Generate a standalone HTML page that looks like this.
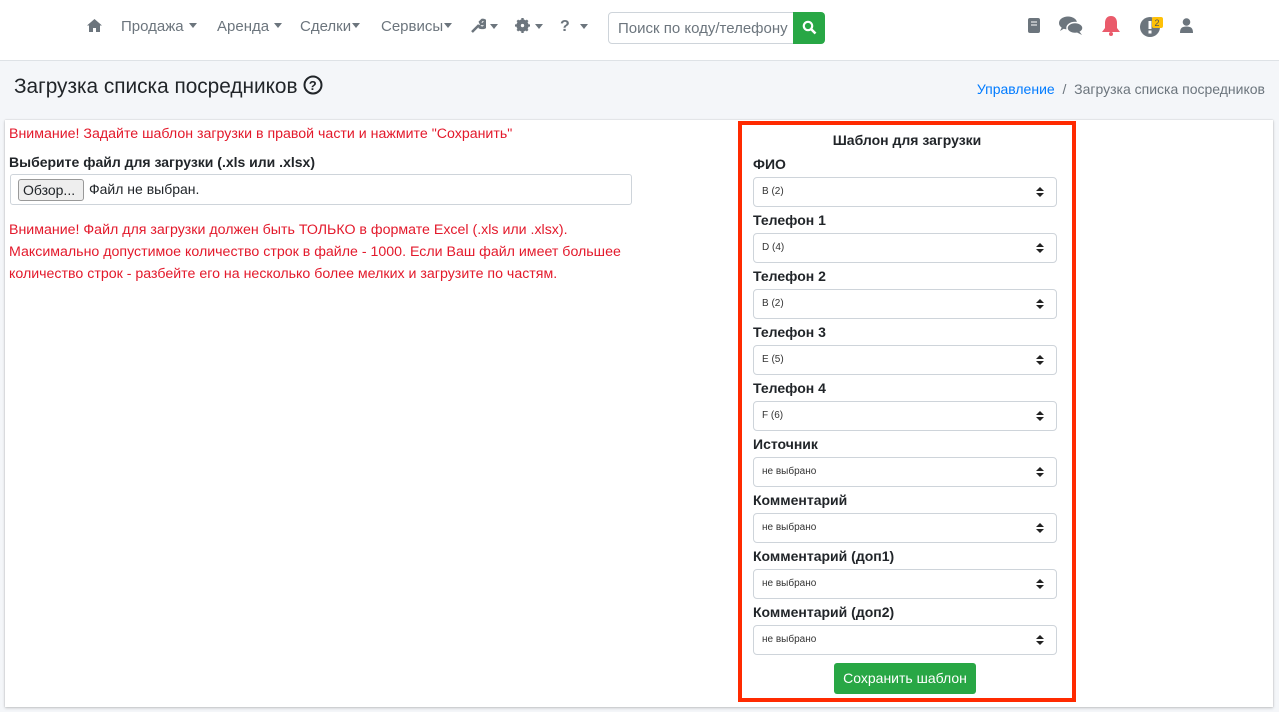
<!DOCTYPE html>
<html><head><meta charset="utf-8"><style>
*{box-sizing:border-box}
body{margin:0;width:1279px;height:712px;overflow:hidden;background:#f4f6f9;font-family:"Liberation Sans",sans-serif;color:#212529}
.nav{position:absolute;left:0;top:0;width:1279px;height:61px;background:#fff;border-bottom:1px solid #dee2e6}
.ni{position:absolute;top:18px;font-size:15px;color:#6c757d}
.car{display:inline-block;border-left:4px solid transparent;border-right:4px solid transparent;border-top:5px solid #6c757d;vertical-align:3px;margin-left:5px}
.search{position:absolute;left:608px;top:12px;width:186px;height:32px;border:1px solid #ced4da;border-radius:4px 0 0 4px;font-size:15px;color:#6c757d;padding:7px 0 0 9px}
.sbtn{position:absolute;left:793px;top:12px;width:32px;height:32px;background:#28a745;border-radius:0 4px 4px 0}
h1{position:absolute;left:14px;top:75px;margin:0;font-size:20.8px;font-weight:400;color:#212529}
.bc{position:absolute;right:14px;top:81px;font-size:14px;color:#6c757d}
.card{position:absolute;left:5px;top:120px;width:1268px;height:587px;background:#fff;box-shadow:0 0 1px rgba(0,0,0,.2),0 1px 3px rgba(0,0,0,.2)}
.red{color:#e3192b;font-size:14.2px}
.box{position:absolute;left:738px;top:121px;width:338px;height:581px;border:4px solid #ff2a00}
.lab{position:absolute;left:11px;font-size:14px;font-weight:bold}
.sel{position:absolute;left:11px;width:304px;height:30px;border:1px solid #ced4da;border-radius:4px;font-size:10px;padding:8px 0 0 8px;color:#333}
.sel:after{content:"";position:absolute;right:12px;top:9px;border-left:4px solid transparent;border-right:4px solid transparent;border-bottom:4px solid #222}
.sel:before{content:"";position:absolute;right:12px;top:15px;border-left:4px solid transparent;border-right:4px solid transparent;border-top:4px solid #222}
</style></head><body>
<div class="nav">
<svg style="position:absolute;left:86px;top:18px" width="17" height="15" viewBox="0 0 17 15"><path d="M8.5 1L1 7.5h2V14h4v-4h3v4h4V7.5h2z" fill="#6c757d"/></svg>
<span class="ni" style="left:121px">Продажа<i class="car"></i></span>
<span class="ni" style="left:217px">Аренда<i class="car"></i></span>
<span class="ni" style="left:300px">Сделки<i class="car" style="margin-left:1px"></i></span>
<span class="ni" style="left:381px">Сервисы<i class="car" style="margin-left:1px"></i></span>
<svg style="position:absolute;left:470px;top:18px" width="16" height="16" viewBox="0 0 16 16"><path d="M2 14l7-7M9 7a4 4 0 1 0 3-5l-2 2 1 2 2 0 2-2a4 4 0 0 1-6 5" stroke="#6c757d" stroke-width="2.5" fill="none"/></svg><i class="car" style="position:absolute;left:485px;top:24px"></i>
<svg style="position:absolute;left:515px;top:18px" width="15" height="15" viewBox="0 0 16 16"><circle cx="8" cy="8" r="5" fill="none" stroke="#6c757d" stroke-width="3"/><path d="M8 0v16M0 8h16M2.5 2.5l11 11M13.5 2.5l-11 11" stroke="#6c757d" stroke-width="2.5"/><circle cx="8" cy="8" r="1.8" fill="#fff"/></svg><i class="car" style="position:absolute;left:530px;top:24px"></i>
<span class="ni" style="left:560px;font-weight:bold;font-size:16px">?</span><i class="car" style="position:absolute;left:575px;top:24px"></i>
<div class="search">Поиск по коду/телефону</div>
<div class="sbtn"><svg style="margin:8px 0 0 9px" width="15" height="15" viewBox="0 0 15 15"><circle cx="6" cy="6" r="4.2" fill="none" stroke="#fff" stroke-width="2.2"/><path d="M9 9l4.5 4.5" stroke="#fff" stroke-width="2.6"/></svg></div>
<svg style="position:absolute;left:1028px;top:18px" width="12" height="15" viewBox="0 0 12 15"><rect x="0" y="0" width="12" height="15" rx="2" fill="#6c757d"/><path d="M3 4h6M3 7h6" stroke="#fff"/></svg>
<svg style="position:absolute;left:1059px;top:16px" width="25" height="20" viewBox="0 0 25 20"><ellipse cx="9" cy="7" rx="9" ry="6.5" fill="#6c757d"/><path d="M3 11l-2 4 5-3z" fill="#6c757d"/><ellipse cx="16" cy="12" rx="8" ry="5.5" fill="#6c757d" stroke="#fff" stroke-width="1.5"/><path d="M20 15l3 4-6-3z" fill="#6c757d"/></svg>
<svg style="position:absolute;left:1101px;top:15px" width="20" height="21" viewBox="0 0 20 21"><path d="M10 1c-4 0-6 3-6 7v5l-3 4h18l-3-4V8c0-4-2-7-6-7z" fill="#ea5b6b"/><circle cx="10" cy="19" r="2" fill="#ea5b6b"/></svg>
<svg style="position:absolute;left:1140px;top:16px" width="24" height="22" viewBox="0 0 24 22"><circle cx="10" cy="11" r="10" fill="#6c757d"/><rect x="8.5" y="5" width="3" height="8" fill="#fff"/><rect x="8.5" y="14.5" width="3" height="3" fill="#fff"/><rect x="12" y="1" width="11" height="11" rx="2" fill="#ffc107"/><text x="14.5" y="10" font-size="9" font-family="Liberation Sans" fill="#555">2</text></svg>
<svg style="position:absolute;left:1180px;top:18px" width="13" height="15" viewBox="0 0 13 15"><circle cx="6.5" cy="4" r="3.8" fill="#6c757d"/><path d="M0 15c0-5 2-6.5 6.5-6.5S13 10 13 15z" fill="#6c757d"/></svg>
</div>
<h1>Загрузка списка посредников <svg width="20" height="20" viewBox="0 0 20 20" style="vertical-align:-2px"><circle cx="10" cy="10" r="8.5" fill="none" stroke="#212529" stroke-width="2"/><text x="5.8" y="15" font-size="13" font-weight="bold" font-family="Liberation Sans" fill="#212529">?</text></svg></h1>
<div class="bc"><span style="color:#007bff">Управление</span>&nbsp; / &nbsp;Загрузка списка посредников</div>
<div class="card">
<div class="red" style="position:absolute;left:4px;top:6px">Внимание! Задайте шаблон загрузки в правой части и нажмите "Сохранить"</div>
<div style="position:absolute;left:4px;top:34px;font-size:14px;font-weight:bold">Выберите файл для загрузки (.xls или .xlsx)</div>
<div style="position:absolute;left:5px;top:54px;width:622px;height:31px;border:1px solid #ced4da;border-radius:3px"><span style="position:absolute;left:7px;top:4px;height:22px;width:66px;border:1px solid #999;border-radius:3px;background:#eee;font-size:14px;padding:2px 0 0 4px">Обзор...</span><span style="position:absolute;left:78px;top:6px;font-size:14px">Файл не выбран.</span></div>
<div class="red" style="position:absolute;left:4px;top:99px;line-height:22px">Внимание! Файл для загрузки должен быть ТОЛЬКО в формате Excel (.xls или .xlsx).<br>Максимально допустимое количество строк в файле - 1000. Если Ваш файл имеет большее<br>количество строк - разбейте его на несколько более мелких и загрузите по частям.</div>
</div>
<div class="box">
<div style="position:absolute;left:0;width:330px;top:7px;text-align:center;font-size:14px;font-weight:bold">Шаблон для загрузки</div>
<div class="lab" style="top:31px">ФИО</div><div class="sel" style="top:52px">B (2)</div>
<div class="lab" style="top:87px">Телефон 1</div><div class="sel" style="top:108px">D (4)</div>
<div class="lab" style="top:143px">Телефон 2</div><div class="sel" style="top:164px">B (2)</div>
<div class="lab" style="top:199px">Телефон 3</div><div class="sel" style="top:220px">E (5)</div>
<div class="lab" style="top:255px">Телефон 4</div><div class="sel" style="top:276px">F (6)</div>
<div class="lab" style="top:311px">Источник</div><div class="sel" style="top:332px">не выбрано</div>
<div class="lab" style="top:367px">Комментарий</div><div class="sel" style="top:388px">не выбрано</div>
<div class="lab" style="top:423px">Комментарий (доп1)</div><div class="sel" style="top:444px">не выбрано</div>
<div class="lab" style="top:479px">Комментарий (доп2)</div><div class="sel" style="top:500px">не выбрано</div>
<div style="position:absolute;left:92px;top:538px;width:142px;height:31px;background:#28a745;border-radius:3px;color:#fff;font-size:14px;text-align:center;padding-top:7px">Сохранить шаблон</div>
</div>
</body></html>
